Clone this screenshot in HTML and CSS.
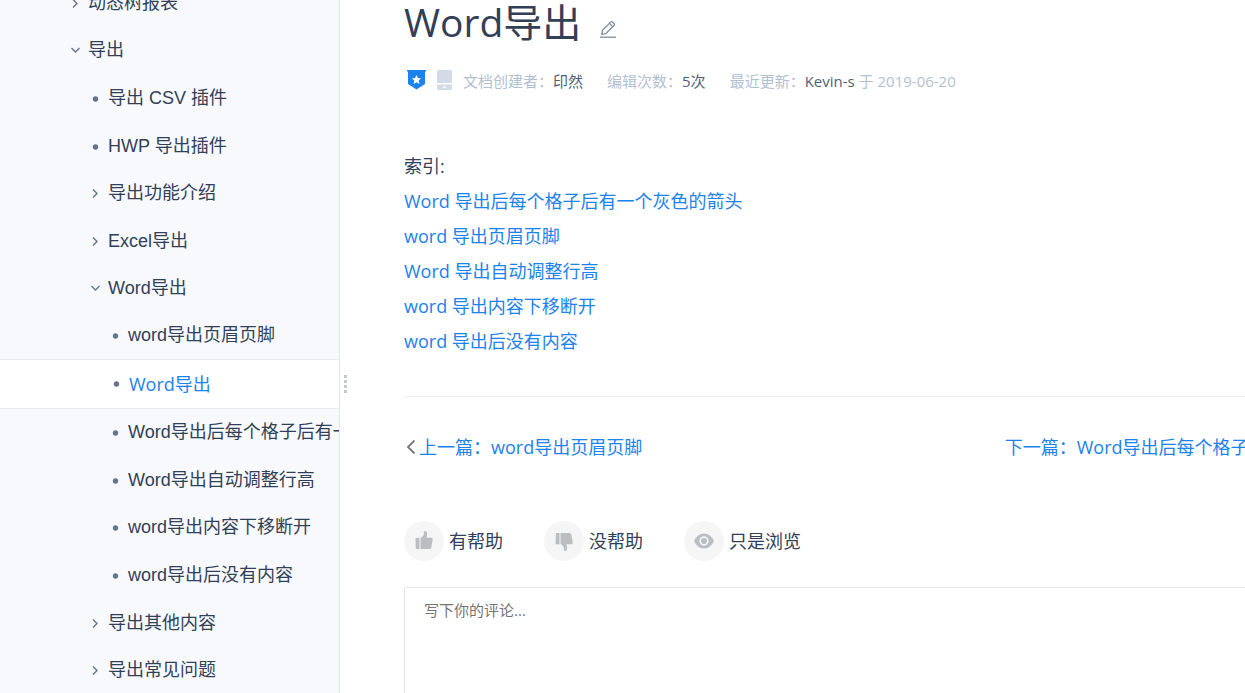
FILE: index.html
```html
<!DOCTYPE html>
<html lang="zh-CN">
<head>
<meta charset="utf-8">
<title>Word导出</title>
<link rel="stylesheet" href="styles.css">
</head>
<body>
<svg class="sprite" aria-hidden="true">
  <symbol id="right" viewBox="0 0 10 10"><path d="M3 0.500l4 4-4 4" fill="none" stroke="currentColor" stroke-width="1.4"/></symbol>
  <symbol id="down" viewBox="0 0 10 10"><path d="M1.500 2l4 4 4-4" fill="none" stroke="currentColor" stroke-width="1.4"/></symbol>
  <symbol id="dot" viewBox="0 0 10 10"><circle cx="5.5" cy="5" r="2.7" fill="currentColor"/></symbol>
</svg>
<div class="layout">
  <nav class="sidebar" aria-label="目录">
    <ul class="tree">
      <li><a class="row" href="#"><svg class="mark"><use href="#right"/></svg>动态树报表</a></li>
      <li><a class="row" href="#"><svg class="mark"><use href="#down"/></svg>导出</a>
        <ul class="branch second">
          <li><a class="row" href="#"><svg class="mark"><use href="#dot"/></svg>导出 CSV 插件</a></li>
          <li><a class="row" href="#"><svg class="mark"><use href="#dot"/></svg>HWP 导出插件</a></li>
          <li><a class="row" href="#"><svg class="mark"><use href="#right"/></svg>导出功能介绍</a></li>
          <li><a class="row" href="#"><svg class="mark"><use href="#right"/></svg>Excel导出</a></li>
          <li><a class="row" href="#"><svg class="mark"><use href="#down"/></svg>Word导出</a>
            <ul class="branch third">
              <li><a class="row" href="#"><svg class="mark"><use href="#dot"/></svg>word导出页眉页脚</a></li>
              <li class="current"><a class="row" href="#" aria-current="page"><svg class="mark"><use href="#dot"/></svg>Word导出</a></li>
              <li><a class="row" href="#"><svg class="mark"><use href="#dot"/></svg>Word导出后每个格子后有一个灰色的箭头</a></li>
              <li><a class="row" href="#"><svg class="mark"><use href="#dot"/></svg>Word导出自动调整行高</a></li>
              <li><a class="row" href="#"><svg class="mark"><use href="#dot"/></svg>word导出内容下移断开</a></li>
              <li><a class="row" href="#"><svg class="mark"><use href="#dot"/></svg>word导出后没有内容</a></li>
            </ul>
          </li>
          <li><a class="row" href="#"><svg class="mark"><use href="#right"/></svg>导出其他内容</a></li>
          <li><a class="row" href="#"><svg class="mark"><use href="#right"/></svg>导出常见问题</a></li>
        </ul>
      </li>
    </ul>
  </nav>
  <div class="gutter"><span class="grip"></span><span class="grip"></span><span class="grip"></span><span class="grip"></span></div>
  <main class="main">
    <header class="heading">
      <h1 class="title">Word导出</h1>
      <button class="edit" type="button" aria-label="编辑">
        <svg width="18" height="18" viewBox="0 0 18 18" fill="none" stroke="currentColor" stroke-width="1.3"><path d="M1 17.2h16"/><path d="M2.8 14.3l.7-4 8.4-8.4q.7-.7 1.4 0l1.9 1.9q.7.7 0 1.4l-8.4 8.4z"/><path d="M10.5 3.4l3.2 3.2"/></svg>
      </button>
    </header>
    <div class="meta">
      <span class="badges">
        <svg width="20" height="20" viewBox="0 0 20 20"><path fill="#1c82ec" d="M0 0h19v1.6h-1V14l-8.5 5.500L1 14V1.6H0z"/><path fill="#fff" d="M9.5 5l1.4 3 3.2.4-2.4 2.2.7 3.3-2.9-1.7-2.9 1.7.7-3.3-2.4-2.2 3.2-.4z"/></svg>
        <svg width="15" height="20" viewBox="0 0 15 20"><path fill="#d3dce6" d="M1.5 0h12Q15 0 15 1.5V13H0V1.5Q0 0 1.500 0zM0 14.500h15v4q0 1.500-1.500 1.500h-12Q0 20 0 18.500z"/><ellipse cx="7.500" cy="17.200" rx="1.800" ry="1" fill="#fff"/></svg>
      </span>
      <span>文档创建者：<b class="value">印然</b></span>
      <span>编辑次数：<b class="value">5次</b></span>
      <span>最近更新：<b class="value">Kevin-s</b> 于 2019-06-20</span>
    </div>
    <article class="content">
      <p class="line">索引:</p>
      <p class="line"><a href="#">Word 导出后每个格子后有一个灰色的箭头</a></p>
      <p class="line"><a href="#">word 导出页眉页脚</a></p>
      <p class="line"><a href="#">Word 导出自动调整行高</a></p>
      <p class="line"><a href="#">word 导出内容下移断开</a></p>
      <p class="line"><a href="#">word 导出后没有内容</a></p>
    </article>
    <nav class="pager" aria-label="翻页">
      <a class="page" href="#"><svg class="back" viewBox="0 0 15 18"><path d="M10.500 1.500L4 8l6.500 6.500" fill="none" stroke="#777" stroke-width="1.800"/></svg>上一篇：word导出页眉页脚</a>
      <a class="page" href="#">下一篇：Word导出后每个格子后有一个灰色的箭头</a>
    </nav>
    <div class="feedback">
      <button class="vote" type="button"><span class="disc"><svg width="20" height="20" viewBox="0 1 20 20" fill="currentColor"><path d="M1.500 8.500q0-.800.800-.800H5.500V19H2.500q-.700 0-.700-.700z"/><path d="M6.500 8.300L9.800 5V2.200Q9.900 1 11.200 1 13.200 1.300 13.200 3.700L12.600 7.700H17.500Q19 7.900 18.700 9.400L17.300 17.400Q17 19 15.500 19H6.500z"/></svg></span>有帮助</button>
      <button class="vote" type="button"><span class="disc"><svg width="20" height="20" viewBox="0 0 20 20" fill="currentColor"><path d="M2.500 2H5.500V13.300H2.300q-.800 0-.800-.800L1.800 2.700Q1.800 2 2.500 2z"/><path d="M6.500 2H15.500Q17 2 17.300 3.600L18.700 11.600Q19 13.100 17.500 13.300H12.600L13.200 17.300Q13.200 19.700 11.200 20 9.900 20 9.800 18.800V16L6.500 12.700z"/></svg></span>没帮助</button>
      <button class="vote" type="button"><span class="disc"><svg width="20" height="20" viewBox="0 0 20 20" fill="currentColor"><path fill-rule="evenodd" d="M0 10Q3.500 2.500 10 2.500T20 10Q16.500 17.500 10 17.500T0 10zM10 5.300a4.700 4.700 0 100 9.400 4.700 4.700 0 000-9.400z"/><circle cx="10" cy="10" r="3"/></svg></span>只是浏览</button>
    </div>
    <textarea class="comment" aria-label="评论" placeholder="写下你的评论..."></textarea>
  </main>
</div>
</body>
</html>
```
FILE: styles.css
```css
* { box-sizing: border-box; }
body {
  margin: 0;
  overflow: hidden;
  color: #324057;
  background: #fff;
  font: 18px/35px "Open Sans", "Noto Sans CJK SC", sans-serif;
}
a { color: #1c82ec; text-decoration: none; }
button { padding: 0; border: 0; background: none; color: inherit; font: inherit; cursor: pointer; }
.sprite { display: none; }
.layout { display: flex; height: 100vh; }

.sidebar {
  flex: 0 0 340px;
  overflow: hidden;
  border-right: 1px solid #e6e8eb;
  background: #f7f9fd;
  font-family: "Liberation Sans", "Noto Sans CJK SC", sans-serif;
}
.tree, .branch { margin: 0; padding: 0; list-style: none; }
.tree { margin-top: -20px; }
.second { padding-top: 1px; }
.branch > li:nth-child(even) { margin-top: 1px; }
.row {
  display: flex;
  align-items: center;
  gap: 8px;
  padding-left: 70px;
  color: #324057;
  line-height: 47px;
  white-space: nowrap;
}
.second .row { padding-left: 90px; }
.third .row { padding-left: 110px; }
.mark { flex: none; width: 10px; height: 10px; color: #66738a; }
.branch > li.current { margin: 0; border: solid #e9ebed; border-width: 1px 0; background: #fff; }
.current .row {
  padding-left: 111px;
  color: #1c82ec;
  line-height: 48px;
  font-family: "Open Sans", "Noto Sans CJK SC", sans-serif;
}

.gutter {
  flex: 0 0 11px;
  display: flex;
  flex-direction: column;
  align-items: center;
  gap: 2px;
  padding-top: 375px;
}
.grip { width: 3px; height: 3px; background: #c3c9d1; }

.main {
  flex: 1;
  min-width: 0;
  display: flex;
  flex-direction: column;
  padding-left: 53px;
  overflow: hidden;
}
.heading { display: flex; align-items: flex-end; gap: 18px; }
.title { margin: 0; font-size: 39px; line-height: 44px; font-weight: 400; }
.edit { display: flex; padding-bottom: 6px; color: #7d8aa0; }
.meta {
  display: flex;
  align-items: center;
  gap: 24px;
  margin-top: 24px;
  color: #b2bfd1;
  font-size: 15px;
  line-height: 26px;
  white-space: nowrap;
}
.badges { display: flex; gap: 10px; margin: 0 -13px 2px 3px; }
.value { color: #4f5f78; font-weight: 400; }
.content { padding: 55px 0 37px; border-bottom: 1px solid #ebeced; }
.line { margin: 0; }
.pager {
  display: grid;
  grid-template-columns: minmax(0, 5fr) minmax(0, 2fr);
  padding-top: 33px;
  white-space: nowrap;
}
.page { display: flex; align-items: center; }
.back { width: 15px; height: 18px; }
.feedback { display: flex; gap: 41px; padding: 56px 0 26px; }
.vote { display: flex; align-items: center; gap: 5px; white-space: nowrap; }
.disc {
  display: flex;
  align-items: center;
  justify-content: center;
  width: 40px;
  height: 40px;
  border-radius: 50%;
  background: #f5f5f5;
  color: #bbbdc1;
}
.comment {
  flex: 1 0 106px;
  width: 100%;
  padding: 9px 19px;
  border: solid #e6e8eb;
  border-width: 1px 0 0 1px;
  border-radius: 2px 0 0 0;
  outline: 0;
  resize: none;
  font: 15px/26px "Open Sans", "Noto Sans CJK SC", sans-serif;
}
.comment::placeholder { color: #757575; }
```
